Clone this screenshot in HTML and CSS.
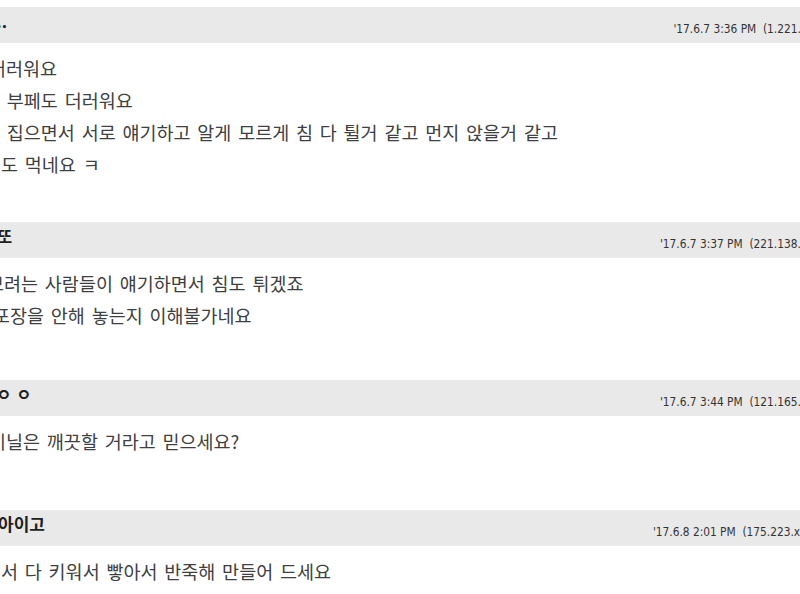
FILE: index.html
```html
<!DOCTYPE html>
<html lang="ko">
<head>
<meta charset="utf-8">
<title>댓글</title>
<link rel="stylesheet" href="styles.css">
</head>
<body>
<div class="board">
  <div class="comment comment--a">
    <div class="comment-head">
      <span class="comment-name name--a">익명..</span>
      <span class="comment-date">'17.6.7 3:36 PM&nbsp;&nbsp;(1.221.xxx.xxx)</span>
    </div>
    <div class="comment-body">
      <p class="indent-6">더러워요</p>
      <p>다 부페도 더러워요</p>
      <p>다 집으면서 서로 얘기하고 알게 모르게 침 다 튈거 같고 먼지 앉을거 같고</p>
      <p class="indent-18">도 먹네요 ㅋ</p>
    </div>
  </div>
  <div class="comment comment--b">
    <div class="comment-head">
      <span class="comment-name name--b">또</span>
      <span class="comment-date">'17.6.7 3:37 PM&nbsp;&nbsp;(221.138.xxx.xxx)</span>
    </div>
    <div class="comment-body">
      <p class="indent-4">보려는 사람들이 얘기하면서 침도 튀겠죠</p>
      <p class="indent-10">포장을 안해 놓는지 이해불가네요</p>
    </div>
  </div>
  <div class="comment comment--c">
    <div class="comment-head">
      <span class="comment-name name--c">ㅇㅇㅇ</span>
      <span class="comment-date">'17.6.7 3:44 PM&nbsp;&nbsp;(121.165.xxx.xxx)</span>
    </div>
    <div class="comment-body">
      <p class="indent-6">비닐은 깨끗할 거라고 믿으세요?</p>
    </div>
  </div>
  <div class="comment comment--d">
    <div class="comment-head">
      <span class="comment-name name--d">아이고</span>
      <span class="comment-date date--d">'17.6.8 2:01 PM&nbsp;&nbsp;(175.223.xxx.xxx)</span>
    </div>
    <div class="comment-body">
      <p class="indent-18">서 다 키워서 빻아서 반죽해 만들어 드세요</p>
    </div>
  </div>
</div>
</body>
</html>
```
FILE: styles.css
```css
html, body {
  margin: 0;
  padding: 0;
  background: #ffffff;
  overflow: hidden;
}

.board {
  width: 863px;
  margin-left: -17px;
  padding-top: 7px;
  font-family: "Noto Sans CJK KR", "Noto Sans", sans-serif;
}

.comment-head {
  display: flex;
  justify-content: space-between;
  align-items: flex-start;
  height: 36px;
  background: #e9e9e9;
}

.comment-name {
  font-size: 16.5px;
  font-weight: bold;
  color: #222;
  line-height: 22px;
  margin-top: 3px;
}

.name--a { margin-left: -17px; }
.name--b { margin-left: 14px; }
.name--c { margin-left: -7px; letter-spacing: 5px; }
.name--d { margin-left: 15px; font-size: 17px; }

.comment-date {
  font-family: "DejaVu Sans Condensed", "DejaVu Sans", sans-serif;
  font-size: 11.8px;
  color: #333;
  line-height: 14px;
  margin-top: 15px;
}

.date--d { margin-right: 7px; }

.comment-body {
  padding-top: 9px;
  font-size: 18.5px;
  word-spacing: 1.6px;
  color: #404040;
  line-height: 32px;
}

.comment-body p {
  margin: 0;
}

.indent-4 { text-indent: 4px; }
.indent-6 { text-indent: 6px; }
.indent-10 { text-indent: 10px; }
.indent-18 { text-indent: 18px; }

.comment--a .comment-body { padding-bottom: 42px; }
.comment--b .comment-body { padding-bottom: 49px; }
.comment--c .comment-body { padding-bottom: 53px; }
.comment--d .comment-body { padding-bottom: 40px; }
```
